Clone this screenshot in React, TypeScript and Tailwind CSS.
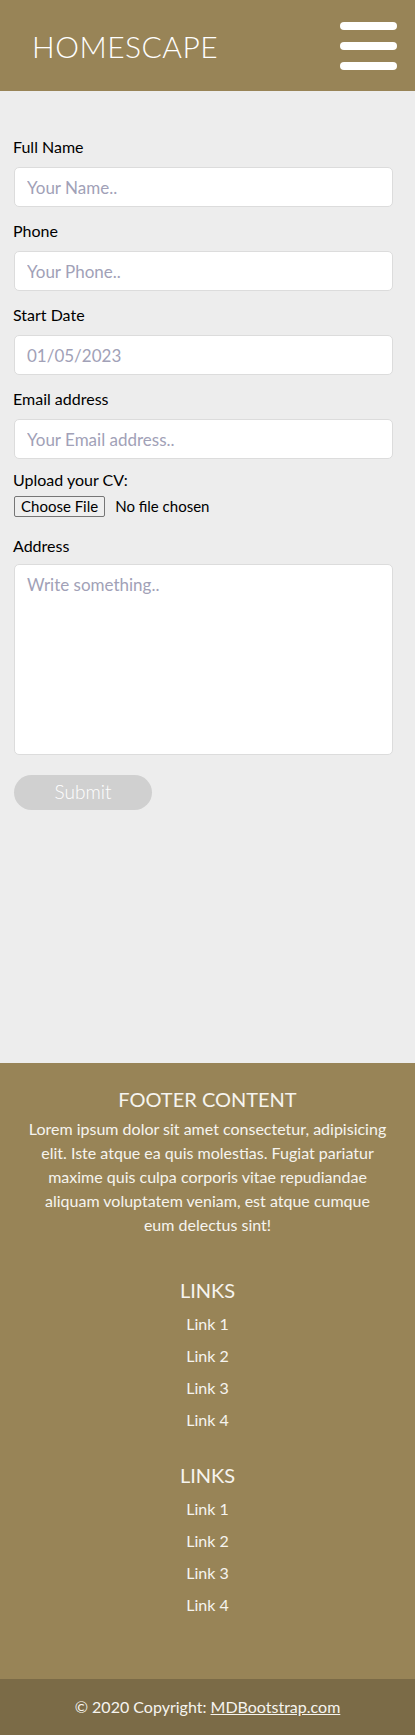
import React from 'react';

const font = { fontFamily: 'Lato, "Noto Sans", sans-serif' };

const fields = [
  { label: 'Full Name', placeholder: 'Your Name..', type: 'text' },
  { label: 'Phone', placeholder: 'Your Phone..', type: 'text' },
  { label: 'Start Date', placeholder: '01/05/2023', type: 'text' },
  { label: 'Email address', placeholder: 'Your Email address..', type: 'email' },
];

const LinkGroup: React.FC = () => (
  <div className="flex flex-col items-center">
    <h5 className="text-[20px] leading-6 mb-[6px]">LINKS</h5>
    <ul className="flex flex-col items-center">
      {['Link 1', 'Link 2', 'Link 3', 'Link 4'].map((l) => (
        <li key={l} className="leading-8 text-[16px]">
          <a href="#">{l}</a>
        </li>
      ))}
    </ul>
  </div>
);

export default function App() {
  return (
    <div className="w-[415px] bg-[#ededed] text-black" style={font}>
      {/* Header */}
      <header className="h-[91px] bg-[#988457] flex items-center justify-between pl-8 pr-[18px]">
        <h1 className="text-white text-[30px] font-light tracking-[0.5px] leading-none">HOMESCAPE</h1>
        <button className="flex flex-col gap-3">
          <span className="block w-[57px] h-2 rounded-full bg-white"></span>
          <span className="block w-[57px] h-2 rounded-full bg-white"></span>
          <span className="block w-[57px] h-2 rounded-full bg-white"></span>
        </button>
      </header>

      {/* Form */}
      <main className="min-h-[972px] pl-[14px] pr-[22px] pt-[44px]">
        <form className="flex flex-col">
          {fields.map((f) => (
            <div key={f.label} className="flex flex-col mb-3">
              <label className="text-[16px] leading-6 mb-2 -ml-px">{f.label}</label>
              <input
                type={f.type}
                placeholder={f.placeholder}
                className="h-10 w-full bg-white border border-[#dcdcdc] rounded-[5px] px-3 text-[17px] placeholder:text-[#a1a1b7] outline-none"
              />
            </div>
          ))}

          <div className="flex flex-col -mt-[3px]">
            <label className="text-[16px] leading-6 -ml-px">Upload your CV:</label>
            <label className="flex items-center mt-[3px] text-[15px]">
              <span className="h-[21px] px-[6px] border border-[#767676] bg-[#efefef] rounded-[2px] flex items-center leading-none">Choose File</span>
              <span className="ml-[10px]">No file chosen</span>
              <input type="file" className="hidden" />
            </label>
          </div>

          <label className="text-[16px] leading-6 mt-[16px] mb-[6px] -ml-px">Address</label>
          <textarea
            placeholder="Write something.."
            className="h-[191px] w-full bg-white border border-[#dcdcdc] rounded-[5px] px-3 pt-[7px] text-[17px] placeholder:text-[#a1a1b7] resize-none outline-none"
          />

          <button
            type="submit"
            className="mt-5 w-[138px] h-[35px] rounded-full bg-[#d0d0d0] text-white text-[19px] font-light"
          >
            Submit
          </button>
        </form>
      </main>

      {/* Footer */}
      <footer className="bg-[#988457] text-[#f6f4ef]">
        <div className="px-[27px] pt-[24px] pb-[58px] text-center">
          <h5 className="text-[20px] leading-6 mb-[6px]">FOOTER CONTENT</h5>
          <p className="text-[16px] leading-6">
            Lorem ipsum dolor sit amet consectetur, adipisicing elit. Iste atque ea quis molestias. Fugiat pariatur maxime quis culpa corporis vitae repudiandae aliquam voluptatem veniam, est atque cumque<br />eum delectus sint!
          </p>
          <div className="mt-[41px]">
            <LinkGroup />
          </div>
          <div className="mt-[27px]">
            <LinkGroup />
          </div>
        </div>
        <div className="h-[56px] bg-[#7b6b47] flex items-center justify-center text-[16px]">
          © 2020 Copyright:&nbsp;<a href="#" className="underline">MDBootstrap.com</a>
        </div>
      </footer>
    </div>
  );
}
